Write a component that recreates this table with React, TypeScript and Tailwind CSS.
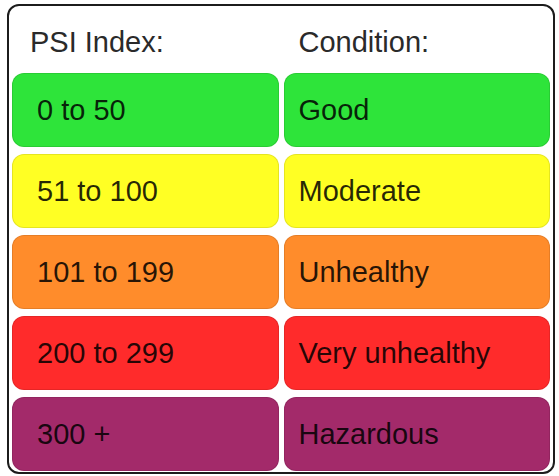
import React from "react";

const rows = [
  { idx: "0 to 50", cond: "Good", bg: "bg-[#2ee43a]" },
  { idx: "51 to 100", cond: "Moderate", bg: "bg-[#ffff24]" },
  { idx: "101 to 199", cond: "Unhealthy", bg: "bg-[#ff8c2b]" },
  { idx: "200 to 299", cond: "Very unhealthy", bg: "bg-[#ff2b2b]" },
  { idx: "300 +", cond: "Hazardous", bg: "bg-[#a32a6a]" },
];

export default function App() {
  return (
    <div
      className="w-[559px] h-[476px] bg-white pl-[7px] pt-[4px]"
      style={{ fontFamily: '"Liberation Sans", Arial, sans-serif' }}
    >
      <div className="w-[548px] h-[470px] border-2 border-[#1c1c1c] rounded-[12px] px-[3px] overflow-hidden">
        <div className="grid grid-cols-2 gap-x-[5px] h-[67px] pt-[20px] text-[29px] leading-[32px] text-[#2a2a2a]">
          <div className="pl-[18px]">PSI Index:</div>
          <div className="pl-[15px]">Condition:</div>
        </div>
        <div className="grid grid-cols-2 gap-x-[5px] gap-y-[7px] auto-rows-[74px]">
          {rows.map((r) => (
            <React.Fragment key={r.idx}>
              <div
                className={`${r.bg} rounded-[12px] border border-black/10 flex items-center pl-[24px] text-[29px] leading-[32px] text-black/85`}
              >
                {r.idx}
              </div>
              <div
                className={`${r.bg} rounded-[12px] border border-black/10 flex items-center pl-[14px] text-[29px] leading-[32px] text-black/85`}
              >
                {r.cond}
              </div>
            </React.Fragment>
          ))}
        </div>
      </div>
    </div>
  );
}
